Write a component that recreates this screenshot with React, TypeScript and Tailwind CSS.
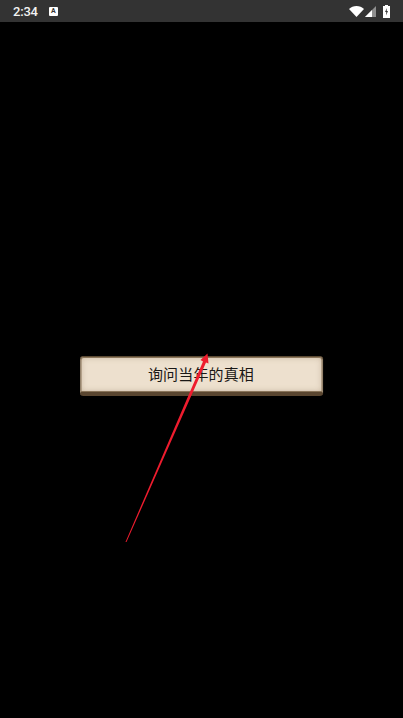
export default function App() {
  return (
    <div className="relative flex h-[718px] w-[403px] flex-col overflow-hidden bg-black font-['Noto_Sans_CJK_SC',sans-serif]">
      <div className="flex h-[22px] shrink-0 items-center bg-[#333333] pl-[13px] pr-[13px]">
        <span className="font-['Roboto',sans-serif] text-[13px] font-medium leading-none tracking-[-0.2px] text-[#f2f2f2]">2:34</span>
        <div className="ml-[11px] flex h-[9px] w-[9px] items-center justify-center rounded-[1px] bg-white">
          <span className="font-['Roboto',sans-serif] text-[7px] font-bold leading-none text-[#333333]">A</span>
        </div>
        <div className="ml-auto flex items-center">
          <svg width="15" height="11" viewBox="0 0 15 11" className="mr-[1px]">
            <path d="M0 3C2 1.100 4.600 0 7.500 0s5.500 1.100 7.500 3L7.500 11z" fill="#ffffff" />
          </svg>
          <svg width="11" height="11" viewBox="0 0 11 11" className="mr-[7px]">
            <path d="M0 11L11 0v11z" fill="#ffffff" fillOpacity="0.45" />
            <path d="M0 11L7 4v7z" fill="#ffffff" />
          </svg>
          <svg width="7" height="13" viewBox="0 0 7 13">
            <path d="M2 0h3v1h2v12H0V1h2z" fill="#ffffff" />
            <path d="M4 3L2 7h1.300L3 10.500 5 6H3.700z" fill="#333333" />
          </svg>
        </div>
      </div>

      <main className="flex flex-1 justify-center pt-[334px]">
        <button className="h-[40px] w-[244px] -translate-x-[0.5px] rounded-[4px] border border-[#5c4a33] border-b-[4px] border-b-[#5a4630] bg-[#ede0ce] pb-[2px] text-[15px] leading-none tracking-[0.15px] text-[#1a1816] shadow-[inset_0_0_0_1px_#8a755a,inset_0_0_6px_rgba(140,115,85,0.45),inset_0_-1px_0_#a89273]">
          询问当年的真相
        </button>
      </main>

      <svg width="403" height="718" viewBox="0 0 403 718" className="pointer-events-none absolute left-0 top-0">
        <path d="M125.500 542L203 361.500L200.500 360L207.500 353.500L208.500 363.500L206 362.500L126.500 542z" fill="#ee1c2e" />
      </svg>
    </div>
  );
}
